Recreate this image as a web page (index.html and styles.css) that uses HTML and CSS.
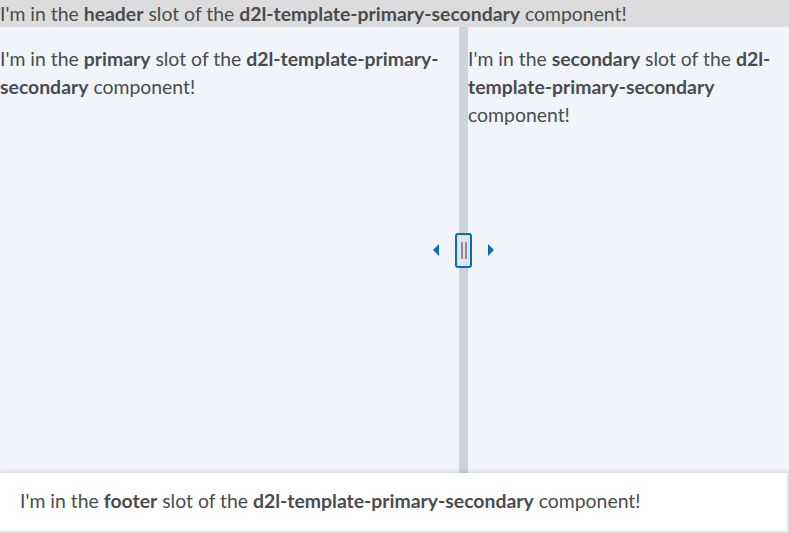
FILE: index.html
```html
<!DOCTYPE html>
<html>
<head>
<meta charset="utf-8">
<link rel="stylesheet" href="styles.css">
</head>
<body>
<div class="page">
  <header class="header">I'm in the <b>header</b> slot of the <b>d2l-template-primary-secondary</b> component!</header>
  <div class="main">
    <section class="primary">
      <p>I'm in the <b>primary</b> slot of the <b>d2l-template-primary-secondary</b> component!</p>
    </section>
    <div class="divider">
      <span class="arrow arrow-left"></span>
      <span class="handle"><span class="grip"></span><span class="grip"></span></span>
      <span class="arrow arrow-right"></span>
    </div>
    <section class="secondary">
      <p>I'm in the <b>secondary</b> slot of the <b>d2l-template-primary-secondary</b> component!</p>
    </section>
  </div>
  <footer class="footer"><span>I'm in the <b>footer</b> slot of the <b>d2l-template-primary-secondary</b> component!</span></footer>
</div>
</body>
</html>
```
FILE: styles.css
```css
html, body {
  margin: 0;
  padding: 0;
  height: 100%;
}
body {
  font-family: Lato, "Open Sans", sans-serif;
  font-size: 19.4px;
  line-height: 28px;
  color: #494c4e;
}
b {
  font-weight: 700;
}
.page {
  display: flex;
  flex-direction: column;
  height: 533px;
  overflow: hidden;
}
.header {
  height: 27px;
  background: #dcdcdc;
  white-space: nowrap;
  line-height: 27px;
}
.main {
  flex: 1;
  display: flex;
  background: #f1f5fb;
  min-height: 0;
}
.primary {
  width: 459px;
}
.secondary {
  flex: 1;
}
.main p {
  margin: 18px 0 0 0;
}
.divider {
  position: relative;
  width: 9px;
  flex-shrink: 0;
  background: #cdd5dc;
  display: flex;
  align-items: center;
  justify-content: center;
}
.handle {
  flex-shrink: 0;
  box-sizing: border-box;
  width: 17px;
  height: 35px;
  border: 2px solid #006fbf;
  border-radius: 3px;
  background: #dfe5eb;
  display: flex;
  justify-content: center;
  align-items: center;
  gap: 2px;
}
.grip {
  width: 2px;
  height: 17px;
  background: #8a9095;
}
.arrow {
  position: absolute;
  top: 50%;
  width: 0;
  height: 0;
  border-top: 6px solid transparent;
  border-bottom: 6px solid transparent;
  margin-top: -6px;
}
.arrow-left {
  left: -26px;
  border-right: 6px solid #006fbf;
}
.arrow-right {
  right: -26px;
  border-left: 6px solid #006fbf;
}
.footer {
  position: relative;
  box-sizing: border-box;
  height: 60px;
  background: #fff;
  padding: 0 20px 2px;
  display: flex;
  align-items: center;
  white-space: nowrap;
  box-shadow: 0 -2px 4px rgba(0, 0, 0, 0.12);
  border-right: 2px solid #e3e3e3;
  border-bottom: 2px solid #e3e3e3;
}
```
